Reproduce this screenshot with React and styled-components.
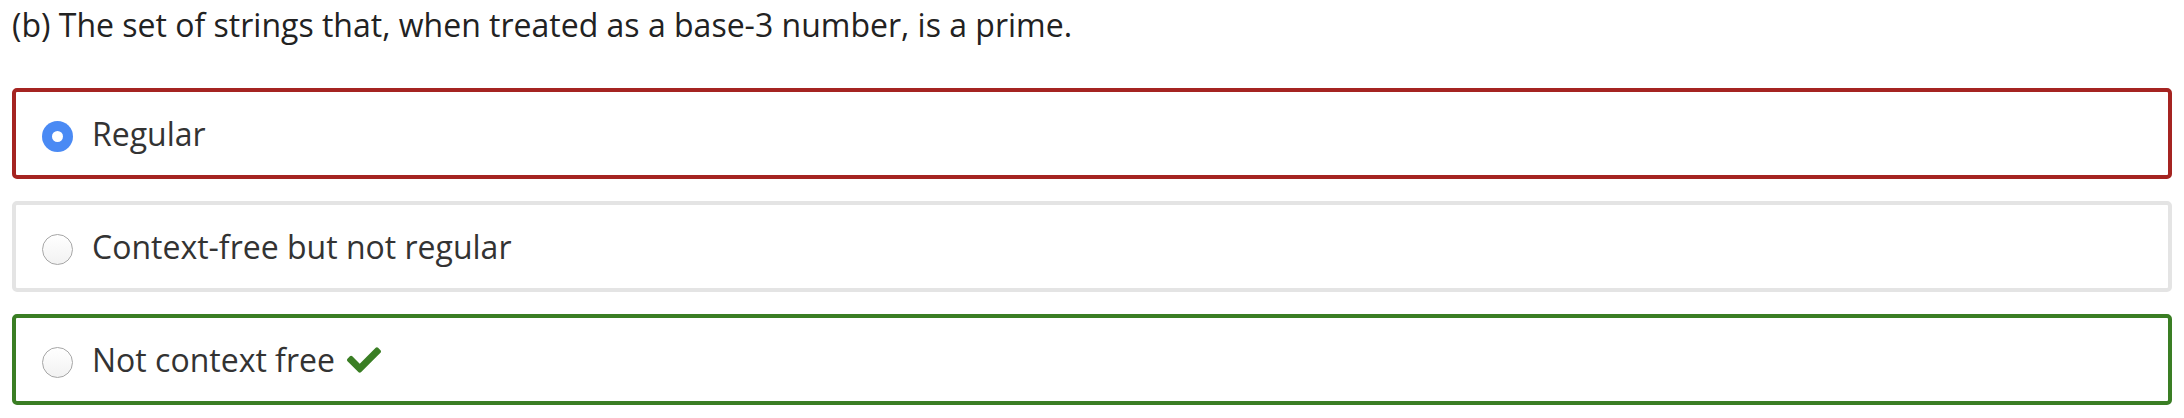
import React from 'react';
import styled, { createGlobalStyle } from 'styled-components';
import { FaCheck } from 'react-icons/fa';

const GlobalStyle = createGlobalStyle`
  html, body {
    margin: 0;
    padding: 0;
    background: #ffffff;
  }
  body {
    font-family: 'Open Sans', 'Liberation Sans', sans-serif;
    color: #333333;
  }
`;

const options = [
  { label: 'Regular', checked: true, status: 'wrong' },
  { label: 'Context-free but not regular', checked: false, status: 'none' },
  { label: 'Not context free', checked: false, status: 'right' },
];

const borderColors = {
  wrong: '#a52421',
  right: '#3a7e24',
  none: '#e4e4e4',
};

const App = () => {
  return (
    <>
      <GlobalStyle />
      <Page>
        <Question>
          (b) The set of strings that, when treated as a base-3 number, is a
          prime.
        </Question>
        <Answers>
          {options.map((opt) => (
            <Option key={opt.label} $status={opt.status}>
              <Radio $checked={opt.checked} />
              <Label>{opt.label}</Label>
              {opt.status === 'right' && <Tick />}
            </Option>
          ))}
        </Answers>
      </Page>
    </>
  );
};

export default App;

const Page = styled.div`
  padding: 4px 12px 12px;
`;

const Question = styled.p`
  margin: 0 0 42px;
  font-size: 32px;
  line-height: 42px;
  color: #222222;
`;

const Answers = styled.div`
  display: flex;
  flex-direction: column;
  gap: 22px;
`;

const Option = styled.div`
  box-sizing: border-box;
  height: 91px;
  display: flex;
  align-items: center;
  padding: 0 26px;
  border: 4px solid ${(p) => borderColors[p.$status]};
  border-radius: 5px;
`;

const Radio = styled.span`
  box-sizing: border-box;
  flex: none;
  width: 31px;
  height: 31px;
  margin-top: 6px;
  margin-right: 19px;
  border-radius: 50%;
  position: relative;
  ${(p) =>
    p.$checked
      ? `
    background: #4a8af4;
    &::after {
      content: '';
      position: absolute;
      left: 50%;
      top: 50%;
      width: 11px;
      height: 11px;
      margin: -5.5px 0 0 -5.5px;
      border-radius: 50%;
      background: #ffffff;
    }
  `
      : `
    border: 1.5px solid #a6a6a6;
    background: linear-gradient(#ffffff, #f2f2f2);
    box-shadow: inset 0 1px 1px rgba(255, 255, 255, 0.8);
  `}
`;

const Label = styled.span`
  font-size: 32px;
  line-height: 42px;
  color: #333333;
`;

const Tick = styled(FaCheck)`
  width: 34px;
  height: 34px;
  margin-left: 12px;
  margin-top: 0;
  color: #3a7e24;
`;
